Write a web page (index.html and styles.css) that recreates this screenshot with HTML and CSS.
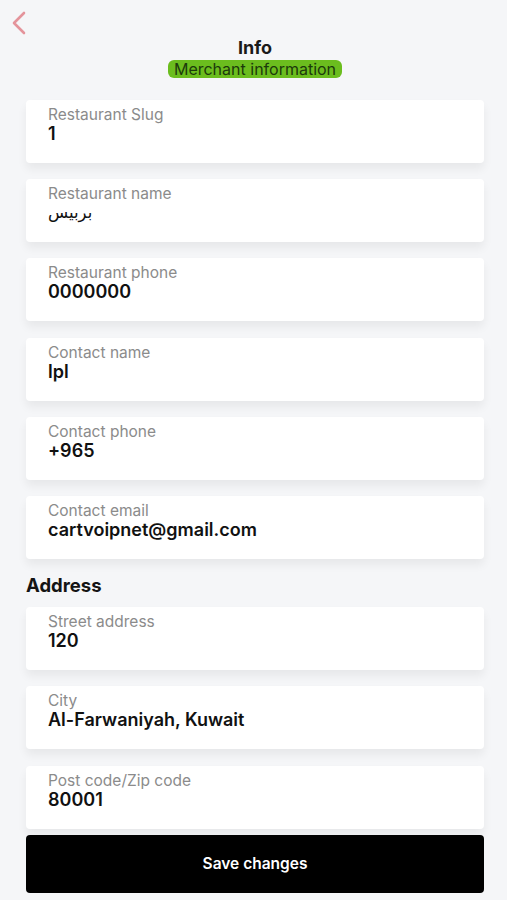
FILE: index.html
```html
<!DOCTYPE html>
<html lang="en">
<head>
    <meta charset="UTF-8">
    <meta name="viewport" content="width=device-width, initial-scale=1.0">
    <title>Info</title>
    <link rel="stylesheet" href="styles.css">
</head>
<body>
    <div class="page">
        <div class="header">
            <a class="back-btn" href="#" aria-label="Back">
                <svg width="16" height="24" viewBox="0 0 16 24" fill="none">
                    <path d="M13 2 L3 12 L13 22" stroke="#e4949b" stroke-width="2.6" stroke-linecap="round" stroke-linejoin="round"/>
                </svg>
            </a>
            <div class="title">Info</div>
            <span class="badge">Merchant information</span>
        </div>

        <div class="field">
            <div class="field-label">Restaurant Slug</div>
            <div class="field-value">1</div>
        </div>
        <div class="field">
            <div class="field-label">Restaurant name</div>
            <div class="field-value arabic">بربيس</div>
        </div>
        <div class="field">
            <div class="field-label">Restaurant phone</div>
            <div class="field-value">0000000</div>
        </div>
        <div class="field">
            <div class="field-label">Contact name</div>
            <div class="field-value">lpl</div>
        </div>
        <div class="field">
            <div class="field-label">Contact phone</div>
            <div class="field-value">+965</div>
        </div>
        <div class="field">
            <div class="field-label">Contact email</div>
            <div class="field-value">cartvoipnet@gmail.com</div>
        </div>

        <h2 class="section-title">Address</h2>

        <div class="field">
            <div class="field-label">Street address</div>
            <div class="field-value">120</div>
        </div>
        <div class="field">
            <div class="field-label">City</div>
            <div class="field-value">Al-Farwaniyah, Kuwait</div>
        </div>
        <div class="field last">
            <div class="field-label">Post code/Zip code</div>
            <div class="field-value">80001</div>
        </div>

        <button class="save-btn">Save changes</button>
    </div>
</body>
</html>
```

FILE: styles.css
```css
body {
    margin: 0;
    background: #f5f6f8;
    font-family: Inter, Roboto, "Noto Sans", sans-serif;
    color: #141414;
}

.page {
    padding: 0 23px 0 26px;
}

.header {
    display: flex;
    flex-direction: column;
    align-items: center;
    padding-top: 38px;
    margin-bottom: 22px;
    position: relative;
}

.back-btn {
    position: absolute;
    left: -15px;
    top: 11px;
    display: block;
}

.title {
    font-size: 18px;
    font-weight: 700;
    line-height: 20px;
    color: #1a1a1a;
}

.badge {
    margin-top: 2px;
    background: #6bbd1e;
    color: #1c3a0b;
    font-size: 16px;
    line-height: 18px;
    padding: 0 6px;
    border-radius: 6px;
}

.field {
    background: #fff;
    border-radius: 4px;
    height: 63px;
    box-sizing: border-box;
    padding: 5px 22px 0;
    margin-bottom: 16.2px;
    box-shadow: 0 6px 10px rgba(0, 0, 0, 0.06);
}

.field.last {
    margin-bottom: 6px;
}

.field-label {
    font-size: 15.5px;
    line-height: 19px;
    color: #8b8b8b;
}

.field-value {
    font-size: 18px;
    line-height: 20px;
    font-weight: 600;
    color: #111;
}

.field-value.arabic {
    font-family: "DejaVu Sans", sans-serif;
    font-weight: 400;
    font-size: 16.5px;
}

.section-title {
    margin: 0 0 12px 0;
    font-size: 18.5px;
    line-height: 20px;
    font-weight: 700;
    color: #141414;
}

.save-btn {
    display: block;
    width: 100%;
    height: 58px;
    background: #000;
    color: #fff;
    border: none;
    border-radius: 4px;
    font-family: inherit;
    font-size: 15.5px;
    font-weight: 600;
    cursor: pointer;
}
```
